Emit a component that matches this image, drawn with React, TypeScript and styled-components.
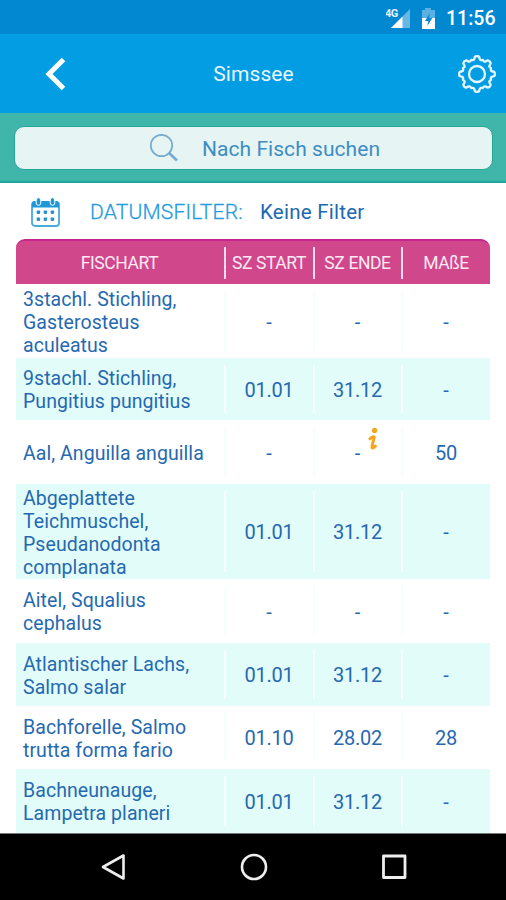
import React from "react";
import styled, { createGlobalStyle } from "styled-components";

const GlobalStyle = createGlobalStyle`
  *, *::before, *::after { box-sizing: border-box; }
  body { margin: 0; background: #fff; font-family: Roboto, "Liberation Sans", sans-serif; }
`;

const Screen = styled.div`
  width: 506px;
  height: 900px;
  display: flex;
  flex-direction: column;
  overflow: hidden;
  background: #fff;
`;

const StatusBar = styled.div`
  height: 34px;
  flex: none;
  display: flex;
  align-items: center;
  justify-content: flex-end;
  padding: 2px 10px 0 0;
  background: #0288d1;
`;

const StatusIcons = styled.svg`
  width: 56px;
  height: 28px;
  margin-right: 4px;
`;

const Clock = styled.span`
  width: 50px;
  padding-top: 1px;
  color: #fff;
  font-size: 19.5px;
  font-weight: 500;
  line-height: 24px;
  white-space: nowrap;
`;

const AppBar = styled.header`
  height: 79px;
  flex: none;
  display: grid;
  grid-template-columns: 84px 1fr 84px;
  align-items: center;
  background: #039de4;
`;

const IconButton = styled.button<{ $align: string; $inset: string }>`
  display: flex;
  justify-content: ${(p) => p.$align};
  padding: ${(p) => p.$inset};
  border: 0;
  background: none;
`;

const Title = styled.h1`
  margin: 0;
  padding: 1px 0 0 1px;
  text-align: center;
  color: #e8f7ff;
  font-size: 21px;
  font-weight: 400;
  line-height: 26px;
  letter-spacing: 0.1px;
`;

const SearchBand = styled.div`
  height: 70px;
  flex: none;
  padding: 13px 13px 0 14px;
  background: #40b5aa;
  border-bottom: 2px solid #1ba799;
`;

const SearchField = styled.div`
  height: 44px;
  display: flex;
  align-items: center;
  padding: 1px 0 0 134px;
  border: 1px solid #22a698;
  border-radius: 10px;
  background: #e6f4f3;
  color: #3d8dc4;
  font-size: 21px;
  letter-spacing: 0.05px;
  white-space: nowrap;

  svg { margin-right: 23px; flex: none; }
`;

const FilterRow = styled.div`
  height: 56px;
  flex: none;
  display: flex;
  align-items: center;
  padding: 2px 0 0 30px;
  white-space: nowrap;
  font-size: 20.5px;
`;

const FilterLabel = styled.span`
  width: 170px;
  margin-left: 29px;
  color: #259be0;
  font-weight: 300;
  font-size: 21px;
  letter-spacing: 0.2px;
  -webkit-text-stroke: 0.3px currentColor;
`;

const FilterValue = styled.span`
  color: #2068b2;
  letter-spacing: 0.25px;
`;

const Table = styled.div`
  width: 474px;
  margin-left: 16px;
  flex: none;
`;

const columns = "210px 89px 88px 87px";

const TableHead = styled.div`
  height: 45px;
  display: grid;
  grid-template-columns: ${columns};
  align-items: center;
  border-top: 2px solid #c3278a;
  border-radius: 9px 9px 0 0;
  background: #d0478c;
`;

const HeadCell = styled.div<{ $divided?: boolean }>`
  height: 32px;
  display: flex;
  align-items: center;
  justify-content: center;
  padding: 1px 1px 0 0;
  border-right: ${(p) => (p.$divided ? "2px solid #fbdcec" : "0")};
  color: #fdeaf4;
  font-size: 17.5px;
  letter-spacing: -0.4px;
  white-space: nowrap;
`;

const Row = styled.div<{ $h: number; $tinted: boolean }>`
  height: ${(p) => p.$h}px;
  display: grid;
  grid-template-columns: ${columns};
  grid-template-rows: 100%;
  padding: 7px 0;
  background: ${(p) => (p.$tinted ? "#e2fcf9" : "#fff")};
`;

const Cell = styled.div<{ $divided?: boolean }>`
  position: relative;
  height: 100%;
  display: flex;
  align-items: center;
  justify-content: center;
  padding: 1px 1px 0 0;
  border-right: ${(p) => (p.$divided ? "2px solid #f7fffe" : "0")};
  color: #2669b0;
  font-size: 20px;
  letter-spacing: -0.2px;
`;

const NameCell = styled(Cell)`
  justify-content: flex-start;
  padding: 2px 0 0 7px;
  font-size: 19.5px;
  line-height: 23px;
  white-space: pre;
  letter-spacing: 0.06px;
`;

const InfoIcon = styled.svg`
  position: absolute;
  left: 52px;
  top: 0;
  width: 12px;
  height: 24px;
`;

const NavBar = styled.nav`
  height: 67px;
  flex: none;
  display: flex;
  align-items: center;
  justify-content: space-between;
  padding: 0 98px 0 99px;
  border-top: 1px solid #777;
  background: #000;
`;

type Fish = { name: string; start: string; end: string; size: string; h: number; info?: boolean };

const fish: Fish[] = [
  { name: "3stachl. Stichling,\nGasterosteus\naculeatus", start: "-", end: "-", size: "-", h: 74 },
  { name: "9stachl. Stichling,\nPungitius pungitius", start: "01.01", end: "31.12", size: "-", h: 62 },
  { name: "Aal, Anguilla anguilla", start: "-", end: "-", size: "50", h: 64, info: true },
  { name: "Abgeplattete\nTeichmuschel,\nPseudanodonta\ncomplanata", start: "01.01", end: "31.12", size: "-", h: 95 },
  { name: "Aitel, Squalius\ncephalus", start: "-", end: "-", size: "-", h: 64 },
  { name: "Atlantischer Lachs,\nSalmo salar", start: "01.01", end: "31.12", size: "-", h: 63 },
  { name: "Bachforelle, Salmo\ntrutta forma fario", start: "01.10", end: "28.02", size: "28", h: 63 },
  { name: "Bachneunauge,\nLampetra planeri", start: "01.01", end: "31.12", size: "-", h: 64 },
];

/* Gear outline: eight rounded teeth separated by scalloped notches. */
const gearPath = (() => {
  const pt = (r: number, deg: number) => {
    const a = (deg * Math.PI) / 180;
    return `${(19 + r * Math.sin(a)).toFixed(2)} ${(19 - r * Math.cos(a)).toFixed(2)}`;
  };
  let d = `M${pt(17.4, -7)}`;
  for (let i = 0; i < 8; i++) {
    const c = i * 45;
    d += `Q${pt(18.6, c)} ${pt(17.4, c + 7)}`;
    d += `Q${pt(15.8, c + 9)} ${pt(15, c + 11)}`;
    d += `C${pt(13.6, c + 15)} ${pt(14.8, c + 18)} ${pt(15.2, c + 22.5)}`;
    d += `C${pt(14.8, c + 27)} ${pt(13.6, c + 30)} ${pt(15, c + 34)}`;
    d += `Q${pt(15.8, c + 36)} ${pt(17.4, c + 38)}`;
  }
  return d + "Z";
})();

const GearIcon = () => (
  <svg width="38" height="38" viewBox="0 0 38 38" fill="none" stroke="#e4f6ff" strokeWidth="2.3" strokeLinejoin="round">
    <path d={gearPath} />
    <circle cx="19" cy="19" r="8" />
  </svg>
);

const BackIcon = () => (
  <svg width="22" height="34" viewBox="0 0 22 34" fill="none" stroke="#fff" strokeWidth="5">
    <path d="M19.5 2.5 L5 17 L19.5 31.5" />
  </svg>
);

const SearchIcon = () => (
  <svg width="30" height="30" viewBox="0 0 30 30" fill="none" stroke="#77acd0">
    <circle cx="12.5" cy="11.5" r="10.7" strokeWidth="1.7" />
    <path d="M19.5 18.5 L28 26.5" strokeWidth="2.8" />
  </svg>
);

const CalendarIcon = () => (
  <svg width="31" height="31" viewBox="0 0 31 31">
    <rect x="2" y="5" width="27" height="24" rx="3" fill="#fff" stroke="#48a9df" strokeWidth="1.8" />
    <path d="M2 10.5V7a3 3 0 0 1 3-3h21a3 3 0 0 1 3 3v3.5Z" fill="#1f98da" />
    {[8.5, 22.5].map((x) => (
      <rect key={x} x={x - 2.3} y="0.7" width="4.6" height="7.6" rx="2.3" fill="#1f98da" stroke="#fff" strokeWidth="1" />
    ))}
    {[15, 22].flatMap((y) =>
      [8.5, 15.5, 22.5].map((x) => <rect key={`${x}-${y}`} x={x - 1.8} y={y - 1.5} width="3.4" height="3.4" rx="0.8" fill="#258fd0" />)
    )}
  </svg>
);

/* Information symbol: a dot over a slanted, hooked stem. */
const InfoMark = () => (
  <InfoIcon viewBox="0 0 12 24" fill="none" stroke="#f3a51d" strokeLinecap="round" strokeLinejoin="round">
    <circle cx="7.6" cy="3.4" r="2.6" fill="#f3a51d" stroke="none" />
    <path d="M3 11.8C4.6 10 7 9 7.2 10.4C7.2 12 4.8 18 5 20.4C5.6 21.4 7.2 20.6 8.4 19" strokeWidth="3" />
  </InfoIcon>
);

export default function App() {
  return (
    <>
      <GlobalStyle />
      <Screen>
        <StatusBar>
          <StatusIcons viewBox="0 0 56 28">
            <path d="M24 5V24H5Z" fill="#67b7e4" />
            <path d="M16.5 12.5V24H5Z" fill="#fff" />
            <text x="-1" y="13" fill="#e5f4fc" fontSize="11" fontWeight="700" letterSpacing="-0.5">4G</text>
            <path d="M36 6h3V4h6v2h4v9H36Z" fill="#5ab1e2" />
            <path d="M36 14h13v11H36Z" fill="#fff" />
            <path d="M44 9l-5 8h3.3l-1 5 5-8h-3.3Z" fill="#0288d1" />
          </StatusIcons>
          <Clock>11:56</Clock>
        </StatusBar>
        <AppBar>
          <IconButton $align="flex-start" $inset="0 0 0 44px" aria-label="Zurück"><BackIcon /></IconButton>
          <Title>Simssee</Title>
          <IconButton $align="flex-end" $inset="0 10px 0 0" aria-label="Einstellungen"><GearIcon /></IconButton>
        </AppBar>
        <SearchBand>
          <SearchField><SearchIcon />Nach Fisch suchen</SearchField>
        </SearchBand>
        <FilterRow>
          <CalendarIcon />
          <FilterLabel>DATUMSFILTER:</FilterLabel>
          <FilterValue>Keine Filter</FilterValue>
        </FilterRow>
        <Table>
          <TableHead>
            <HeadCell $divided>FISCHART</HeadCell>
            <HeadCell $divided>SZ START</HeadCell>
            <HeadCell $divided>SZ ENDE</HeadCell>
            <HeadCell>MAßE</HeadCell>
          </TableHead>
          {fish.map((f, i) => (
            <Row key={f.name} $h={f.h} $tinted={i % 2 === 1}>
              <NameCell $divided>{f.name}</NameCell>
              <Cell $divided>{f.start}</Cell>
              <Cell $divided>
                {f.end}
                {f.info && <InfoMark />}
              </Cell>
              <Cell>{f.size}</Cell>
            </Row>
          ))}
        </Table>
        <NavBar>
          <svg width="28" height="30" viewBox="0 0 28 30" fill="none" stroke="#eee" strokeWidth="2.6" strokeLinejoin="round">
            <path d="M24.5 3.5V26.5L4 15Z" />
          </svg>
          <svg width="28" height="30" viewBox="0 0 28 30" fill="none" stroke="#eee" strokeWidth="2.6">
            <circle cx="14" cy="15" r="12" />
          </svg>
          <svg width="28" height="30" viewBox="0 0 28 30" fill="none" stroke="#eee" strokeWidth="2.8" strokeLinejoin="round">
            <rect x="3.5" y="4" width="21.5" height="21.5" />
          </svg>
        </NavBar>
      </Screen>
    </>
  );
}
